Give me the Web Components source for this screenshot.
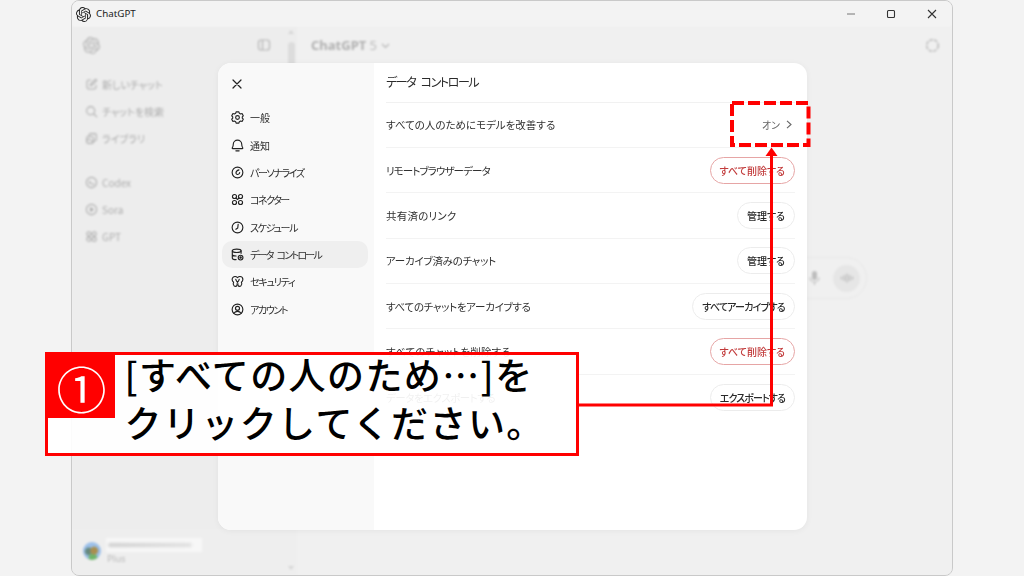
<!DOCTYPE html>
<html lang="ja"><head><meta charset="utf-8"><title>ChatGPT</title>
<style>
html,body{margin:0;padding:0;background:#f3f3f3;}
body{width:1024px;height:576px;overflow:hidden;font-family:"Noto Sans CJK JP","Noto Sans",sans-serif;font-feature-settings:"palt";}
</style></head><body>
<x-stage>
  <x-window>
    <x-sidebar slot="side">
      <x-side-item icon="edit" style="margin-top:7.500px">新しいチャット</x-side-item>
      <x-side-item icon="search">チャットを検索</x-side-item>
      <x-side-item icon="lib">ライブラリ</x-side-item>
      <x-side-item icon="codex" style="margin-top:16.500px">Codex</x-side-item>
      <x-side-item icon="play">Sora</x-side-item>
      <x-side-item icon="grid">GPT</x-side-item>
    </x-sidebar>
    <x-main slot="main"></x-main>
  </x-window>
  <x-modal>
    <x-nav-item slot="nav" icon="gear">一般</x-nav-item>
    <x-nav-item slot="nav" icon="bell">通知</x-nav-item>
    <x-nav-item slot="nav" icon="smile" ls="-1.400">パーソナライズ</x-nav-item>
    <x-nav-item slot="nav" icon="conn" ls="-1.500">コネクター</x-nav-item>
    <x-nav-item slot="nav" icon="clock" ls="-1.300">スケジュール</x-nav-item>
    <x-nav-item slot="nav" icon="db" ls="-1.700" active>データ コントロール</x-nav-item>
    <x-nav-item slot="nav" icon="sec" ls="-1.200">セキュリティ</x-nav-item>
    <x-nav-item slot="nav" icon="user" ls="-1.400">アカウント</x-nav-item>
    <x-row label="すべての人のためにモデルを改善する" ls="0"><x-toggle-value>オン</x-toggle-value></x-row>
    <x-row label="リモートブラウザーデータ" ls="-.9"><x-pill danger>すべて削除する</x-pill></x-row>
    <x-row label="共有済のリンク" ls=".2"><x-pill>管理する</x-pill></x-row>
    <x-row label="アーカイブ済みのチャット" ls="-.25"><x-pill>管理する</x-pill></x-row>
    <x-row label="すべてのチャットをアーカイブする" ls="-.3"><x-pill ls="-.8">すべてアーカイブする</x-pill></x-row>
    <x-row label="すべてのチャットを削除する" ls=".15"><x-pill danger>すべて削除する</x-pill></x-row>
    <x-row label="データをエクスポートする" ls="-.5" last><x-pill ls="-.9">エクスポートする</x-pill></x-row>
  </x-modal>
  <x-annotation></x-annotation>
  <x-callout num="①"><span>[すべての人のため…]を</span><br><span>クリックしてください。</span></x-callout>
</x-stage>
<script>
const LOGO='M22.2819 9.8211a5.9847 5.9847 0 0 0-.5157-4.9108 6.0462 6.0462 0 0 0-6.5098-2.9A6.0651 6.0651 0 0 0 4.9807 4.1818a5.9847 5.9847 0 0 0-3.9977 2.9 6.0462 6.0462 0 0 0 .7427 7.0966 5.98 5.98 0 0 0 .511 4.9107 6.051 6.051 0 0 0 6.5146 2.9001A5.9847 5.9847 0 0 0 13.2599 24a6.0557 6.0557 0 0 0 5.7718-4.2058 5.9894 5.9894 0 0 0 3.9977-2.9001 6.0557 6.0557 0 0 0-.7475-7.0729zm-9.022 12.6081a4.4755 4.4755 0 0 1-2.8764-1.0408l.1419-.0804 4.7783-2.7582a.7948.7948 0 0 0 .3927-.6813v-6.7369l2.02 1.1686a.071.071 0 0 1 .038.052v5.5826a4.504 4.504 0 0 1-4.4945 4.4944zm-9.6607-4.1254a4.4708 4.4708 0 0 1-.5346-3.0137l.142.0852 4.783 2.7582a.7712.7712 0 0 0 .7806 0l5.8428-3.3685v2.3324a.0804.0804 0 0 1-.0332.0615L9.74 19.9502a4.4992 4.4992 0 0 1-6.1408-1.6464zM2.3408 7.8956a4.485 4.485 0 0 1 2.3655-1.9728V11.6a.7664.7664 0 0 0 .3879.6765l5.8144 3.3543-2.0201 1.1685a.0757.0757 0 0 1-.071 0l-4.8303-2.7865A4.504 4.504 0 0 1 2.3408 7.872zm16.5963 3.8558L13.1038 8.364 15.1192 7.2a.0757.0757 0 0 1 .071 0l4.8303 2.7913a4.4944 4.4944 0 0 1-.6765 8.1042v-5.6772a.79.79 0 0 0-.407-.667zm2.0107-3.0231l-.142-.0852-4.7735-2.7818a.7759.7759 0 0 0-.7854 0L9.409 9.2297V6.8974a.0662.0662 0 0 1 .0284-.0615l4.8303-2.7866a4.4992 4.4992 0 0 1 6.6802 4.66zM8.3065 12.863l-2.02-1.1638a.0804.0804 0 0 1-.038-.0567V6.0742a4.4992 4.4992 0 0 1 7.3757-3.4537l-.142.0805L8.704 5.459a.7948.7948 0 0 0-.3927.6813zm1.0976-2.3654l2.602-1.4998 2.6069 1.4998v2.9994l-2.5974 1.4997-2.6067-1.4997Z';
const logo=(s,c)=>`<svg width="${s}" height="${s}" viewBox="0 0 24 24" fill="${c}"><path d="${LOGO}"/></svg>`;
const I={
 edit:'<path d="M7 2.500H4.500a2 2 0 0 0-2 2v7a2 2 0 0 0 2 2h7a2 2 0 0 0 2-2V9"/><path d="M6.500 9.500l.5-2.300L12.400 1.900a1.100 1.100 0 0 1 1.600 1.600L8.700 8.900z"/>',
 search:'<circle cx="7" cy="7" r="5"/><path d="M10.800 10.800L14.500 14.500"/>',
 lib:'<rect x="2" y="5.500" width="8.500" height="8.500" rx="2.200"/><path d="M5 5.500V4a2 2 0 0 1 2-2h5a2 2 0 0 1 2 2v5a2 2 0 0 1-2 2h-1.500"/><path d="M2 10.500l3-2 5.500 4"/>',
 codex:'<circle cx="8" cy="8" r="6.300"/><path d="M5.200 6.500L7 8l-1.800 1.500M8.300 10h2.700"/>',
 play:'<circle cx="8" cy="8" r="6.300"/><path d="M6.800 5.800l3.200 2.200-3.200 2.200z" fill="currentColor"/>',
 grid:'<circle cx="4.700" cy="4.700" r="2.500"/><circle cx="11.300" cy="4.700" r="2.500"/><circle cx="4.700" cy="11.300" r="2.500"/><circle cx="11.300" cy="11.300" r="2.500"/>',
 gear:'<path d="M6.300 1.600h3.400l.5 1.700 1.700.9 1.700-.5 1.500 2.800-1.200 1.300v1.600l1.200 1.300-1.500 2.800-1.700-.5-1.700.9-.5 1.700H6.300l-.5-1.700-1.700-.9-1.700.5L.9 10.700l1.200-1.300V7.800L.9 6.500l1.500-2.800 1.700.5 1.700-.9z" transform="translate(0 -.600)"/><circle cx="8" cy="8" r="2.300"/>',
 bell:'<path d="M8 1.400a5.200 5.200 0 0 1 5.200 5.200c0 2.200.5 3.300 1.200 4.200.4.500.1 1.100-.5 1.100H2.100c-.6 0-.9-.6-.5-1.100.7-.9 1.200-2 1.200-4.200A5.200 5.200 0 0 1 8 1.400z"/><path d="M6 14.600h4"/>',
 smile:'<circle cx="8" cy="8" r="6.600"/><path d="M9.800 4.800C8 5.300 6.100 6.900 6.100 8.700c0 1.500 1.900 2.200 3.300 1.300.8-.5 1.200-1.100 1.300-1.900"/>',
 conn:'<circle cx="4.300" cy="4.300" r="2.500"/><circle cx="11.700" cy="4.300" r="2.500"/><circle cx="4.300" cy="11.700" r="2.500"/><circle cx="11.700" cy="11.700" r="2.500"/><path d="M6.300 6.300l1.700 1.700M9.700 6.300L8 8"/>',
 clock:'<circle cx="8" cy="8" r="6.600"/><path d="M8.800 4.200L8.300 8.600 6 10.200"/>',
 db:'<ellipse cx="7" cy="3.400" rx="5.400" ry="2.100"/><path d="M1.600 3.400v8.800c0 1.300 2.400 2.100 4.700 2.100M12.400 3.400v3.200M1.600 7.800c0 1.200 2.200 2.100 4.700 2.100"/><circle cx="11.800" cy="11.800" r="2.900"/><circle cx="11.800" cy="11.800" r=".8" fill="currentColor"/>',
 sec:'<path d="M5 1.800C3 1.800 1.400 3.400 1.400 5.500c0 1.600.9 2.800 1.800 3.400-.7 1.300-.6 3.300.6 4.400 1.100 1 2.700.9 3.400-.2.400-.6.400-1.600.2-2.400"/><path d="M11 1.800c2 0 3.600 1.600 3.600 3.700 0 1.600-.9 2.800-1.800 3.400.7 1.300.6 3.300-.6 4.400-1.100 1-2.700.9-3.400-.2-.4-.6-.4-1.600-.2-2.400"/><path d="M5 1.800c1.200 0 2.200.6 3 1.500.8-.9 1.800-1.500 3-1.500M5.800 5.200c.4 1.700 1.400 3 2.200 3.800.8-.8 1.800-2.100 2.200-3.800"/>',
 user:'<circle cx="8" cy="8" r="6.600"/><circle cx="8" cy="6.600" r="2.500"/><path d="M3.600 12.600c1-1.500 2.600-2.300 4.400-2.300s3.400.8 4.400 2.300"/>'
};
const icon=(n,s,w=1.3)=>`<svg width="${s}" height="${s}" viewBox="0 0 16 16" fill="none" stroke="currentColor" stroke-width="${w}" stroke-linecap="round" stroke-linejoin="round">${I[n]}</svg>`;
function def(name,render){
  customElements.define(name,class extends HTMLElement{
    connectedCallback(){ if(this.shadowRoot) return; const r=this.attachShadow({mode:'open'}); r.innerHTML=render(this); }
  });
}
def('x-stage',()=>`<style>:host{display:block;position:relative;width:1024px;height:576px;overflow:hidden;background:#f3f3f3}</style><slot></slot>`);
def('x-window',()=>`<style>
:host{display:flex;flex-direction:column;box-sizing:border-box;margin-left:71px;width:882px;height:576px;background:#f0f0f0;border:1px solid #c9c9c9;border-radius:8px;overflow:hidden;color:#1c1c1c}
.bar{flex:none;height:26px;display:flex;align-items:center;background:#f3f3f3;padding-left:4px}
.bar .t{font:9.800px/1 "Noto Sans","Noto Sans CJK JP",sans-serif;margin-left:5px;color:#222}
.ctl{margin-left:auto;display:flex;color:#333}
.ctl span{width:40.500px;display:flex;justify-content:center;align-items:center}
.body{flex:1;display:flex;min-height:0;filter:blur(.9px)}
</style>
<div class="bar">${logo(15,'#222')}<span class="t">ChatGPT</span>
<div class="ctl"><span><svg width="10" height="10" viewBox="0 0 10 10" stroke="currentColor" fill="none"><path d="M1 5h8" stroke="#777"/></svg></span><span><svg width="10" height="10" viewBox="0 0 10 10" stroke="currentColor" fill="none" stroke-width="1.100"><rect x="1.500" y="1.500" width="7" height="7" rx="1"/></svg></span><span><svg width="10" height="10" viewBox="0 0 10 10" stroke="currentColor" fill="none" stroke-width="1.100"><path d="M1 1l8 8M9 1l-8 8"/></svg></span></div></div>
<div class="body"><slot name="side"></slot><slot name="main"></slot></div>`);
def('x-sidebar',()=>`<style>
:host{display:flex;flex-direction:column;flex:none;width:225px;box-sizing:border-box;background:#ededed;color:#a9a9a9;position:relative}
.top{height:36px;display:flex;align-items:center;padding:0 11px;flex:none}
.top .p{margin-left:auto;margin-right:15px;display:flex}
.list{flex:1;display:flex;flex-direction:column}
.foot{flex:none;height:48px;border-top:1px solid #ebebeb;box-sizing:border-box;display:flex;align-items:center;padding-left:11px;gap:5px;background:#eeeeee}
.av{width:18px;height:18px;border-radius:50%;background:radial-gradient(circle at 62% 48%,#a98f4f 0 22%,transparent 32%),radial-gradient(circle at 55% 88%,#6fb56a 0 18%,transparent 28%),radial-gradient(circle at 32% 52%,#66897f 0 20%,transparent 30%),#9cc0ea;flex:none;margin-bottom:2px}
.who{display:flex;flex-direction:column;width:96px}
.name{height:14px;background:#f7f7f7;display:flex;align-items:center;padding-left:2px}
.name i{display:block;width:84px;height:4px;background:linear-gradient(90deg,#cfcfcf,#e0e0e0);border-radius:2px;filter:blur(1.200px)}
.plan{font:9.500px/13px "Noto Sans",sans-serif;color:#b9b9b9;margin-left:1px}
.sb{position:absolute;right:2px;top:0;bottom:0;width:8px;display:flex;flex-direction:column;align-items:center}
.sb b{display:block;width:7px;height:26px;background:#dcdcdc;border-radius:4px;margin-top:8px}
.tri{width:0;height:0;border-left:3.500px solid transparent;border-right:3.500px solid transparent;border-bottom:4px solid #d6d6d6;margin-top:3px}
.tri.d{border-bottom:0;border-top:4px solid #d6d6d6;margin:auto 0 5px}
</style>
<div class="top">${logo(17,'#b0b0b0')}<span class="p"><svg width="14" height="14" viewBox="0 0 14 14" fill="none" stroke="#b5b5b5" stroke-width="1.200"><rect x="1.500" y="2" width="11" height="10" rx="2.500"/><path d="M5.500 2v10"/></svg></span></div>
<div class="list"><slot></slot></div>
<div class="foot"><span class="av"></span><div class="who"><div class="name"><i></i></div><div class="plan">Plus</div></div></div>
<div class="sb"><span class="tri"></span><b></b><span class="tri d"></span></div>`);
def('x-side-item',h=>`<style>
:host{display:flex;align-items:center;height:27.200px;padding-left:13px;gap:4px;font-size:10px;color:#adadad;flex:none}
svg{flex:none}
</style>${icon(h.getAttribute('icon'),13)}<span><slot></slot></span>`);
def('x-main',()=>`<style>
:host{flex:1;display:flex;flex-direction:column;min-width:0;background:#f0f0f0;color:#aaa}
.hd{display:flex;align-items:center;height:36px;padding:0 12px 0 14px;flex:none}
.tt{font:700 13px/1 "Noto Sans",sans-serif;color:#b0b0b0}
.tt em{font-style:normal;font-weight:400;color:#bbb}
.hd svg.c{margin-left:4px}
.hd .r{margin-left:auto;display:flex}
.cmp{box-sizing:border-box;margin:194px 0 0 80px;width:490px;height:42px;border:1px solid #e8e8e8;border-radius:21px;display:flex;align-items:center;justify-content:flex-end;padding-right:6px;gap:13px}
.w{width:27px;height:27px;border-radius:50%;background:#e6e6e6;display:flex;align-items:center;justify-content:center}
</style>
<div class="hd"><span class="tt">ChatGPT <em>5</em></span><svg class="c" width="9" height="9" viewBox="0 0 9 9" fill="none" stroke="#b5b5b5" stroke-width="1.100"><path d="M1 3l3.500 3.500L8 3"/></svg>
<span class="r"><svg width="15" height="15" viewBox="0 0 15 15" fill="none" stroke="#b5b5b5" stroke-width="1.400" stroke-dasharray="3.500 1.200"><circle cx="7.500" cy="7.500" r="5.800"/></svg></span></div>
<div class="cmp"><svg width="11" height="14" viewBox="0 0 11 14" fill="#bdbdbd"><rect x="3" y="0" width="5" height="9" rx="2.500"/><path d="M1 6.500a4.500 4.500 0 0 0 9 0M5.500 11v3" fill="none" stroke="#bdbdbd" stroke-width="1.200"/></svg>
<span class="w"><svg width="14" height="10" viewBox="0 0 14 10" stroke="#b4b4b4" stroke-width="1.200" stroke-linecap="round"><path d="M1.500 4v2M4.300 2.500v5M7 1v8M9.700 2.500v5M12.500 4v2"/></svg></span></div>`);
def('x-modal',()=>`<style>
:host{position:absolute;left:218px;top:63px;width:589px;height:467px;display:grid;grid-template-columns:156px 1fr;border-radius:13px;overflow:hidden;background:#fff;box-shadow:0 1px 6px rgba(0,0,0,.05);color:#222}
nav{background:#f9f9f9;padding:0 6px 0 4px;display:flex;flex-direction:column;filter:blur(.25px)}
.x{height:41.350px;flex:none;display:flex;align-items:center;padding:0 0 0 10px;box-sizing:border-box}
.x svg{margin-top:1px}
.pane{padding:0 12px;display:flex;flex-direction:column;filter:blur(.25px)}
h2{margin:0;height:39.500px;box-sizing:border-box;border-bottom:1px solid #f1f1f1;font-size:12px;font-weight:400;line-height:38px;letter-spacing:-1.400px;word-spacing:4px;color:#2a2a2a;flex:none}
</style>
<nav><div class="x"><svg width="10" height="10" viewBox="0 0 10 10" fill="none" stroke="#222" stroke-width="1.200" stroke-linecap="round"><path d="M1 1l8 8M9 1L1 9"/></svg></div><slot name="nav"></slot></nav>
<div class="pane"><h2>データ コントロール</h2><slot></slot></div>`);
def('x-nav-item',h=>`<style>
:host{display:flex;align-items:center;height:27.300px;flex:none;padding-left:9px;gap:6px;font-size:10px;word-spacing:3px;color:#2c2c2c;border-radius:10px;${h.hasAttribute('active')?'background:#efefef;':''}}
svg{flex:none;color:#222}
span{letter-spacing:${h.getAttribute('ls')||0}px}
</style>${icon(h.getAttribute('icon'),13,1.400)}<span><slot></slot></span>`);
def('x-row',h=>`<style>
:host{display:flex;align-items:center;justify-content:space-between;box-sizing:border-box;height:45.400px;flex:none;${h.hasAttribute('last')?'':'border-bottom:1px solid #f3f3f3;'}font-size:10.500px;color:#303030}
span{letter-spacing:${h.getAttribute('ls')||0}px}
</style><span>${h.getAttribute('label')}</span><slot></slot>`);
def('x-pill',h=>{const d=h.hasAttribute('danger');return `<style>
:host{display:inline-flex;align-items:center;box-sizing:border-box;height:27px;padding:0 9px;border-radius:14px;font-size:10px;font-weight:500;letter-spacing:${h.getAttribute('ls')||0}px;color:${d?'#c23b3b':'#2a2a2a'};border:1px solid ${d?'#e6a5a5':'#ececec'};background:#fff}
</style><slot></slot>`});
def('x-toggle-value',()=>`<style>
:host{display:inline-flex;align-items:center;gap:6px;font-size:10px;color:#666;padding-right:3px}
</style><span><slot></slot></span><svg width="6" height="9" viewBox="0 0 6 9" fill="none" stroke="#666" stroke-width="1.100"><path d="M1 .8L5 4.500 1 8.200"/></svg>`);
def('x-annotation',()=>`<style>
:host{position:absolute;left:0;top:0;width:1024px;height:576px;pointer-events:none}
svg{display:block}
</style><svg width="1024" height="576" viewBox="0 0 1024 576" fill="none">
<rect x="732" y="103" width="76.500" height="42" stroke="#f00" stroke-width="4" stroke-dasharray="12 4"/>
<path d="M578 405H771.500V152" stroke="#f00" stroke-width="3"/>
<path d="M771.500 147.500L777.500 156H765.500z" fill="#f00"/></svg>`);
def('x-callout',h=>`<style>
:host{position:absolute;left:45px;top:352px;width:533.500px;height:104px;box-sizing:border-box;border:3px solid #f00;background:rgba(255,255,255,.93);display:grid;grid-template-columns:67px 1fr;align-items:start;color:#000;font-feature-settings:normal}
.n{height:63px;background:#f00;color:#fff;display:flex;align-items:center;justify-content:center;font:400 50px/1 "Noto Sans CJK JP",sans-serif}
.t{margin:-4px 0 0 9.500px;font-size:37px;font-weight:500;line-height:47.500px;letter-spacing:1.400px;white-space:nowrap}
</style><div class="n">${h.getAttribute('num')}</div><div class="t"><slot></slot></div>`);
</script>
</body></html>
